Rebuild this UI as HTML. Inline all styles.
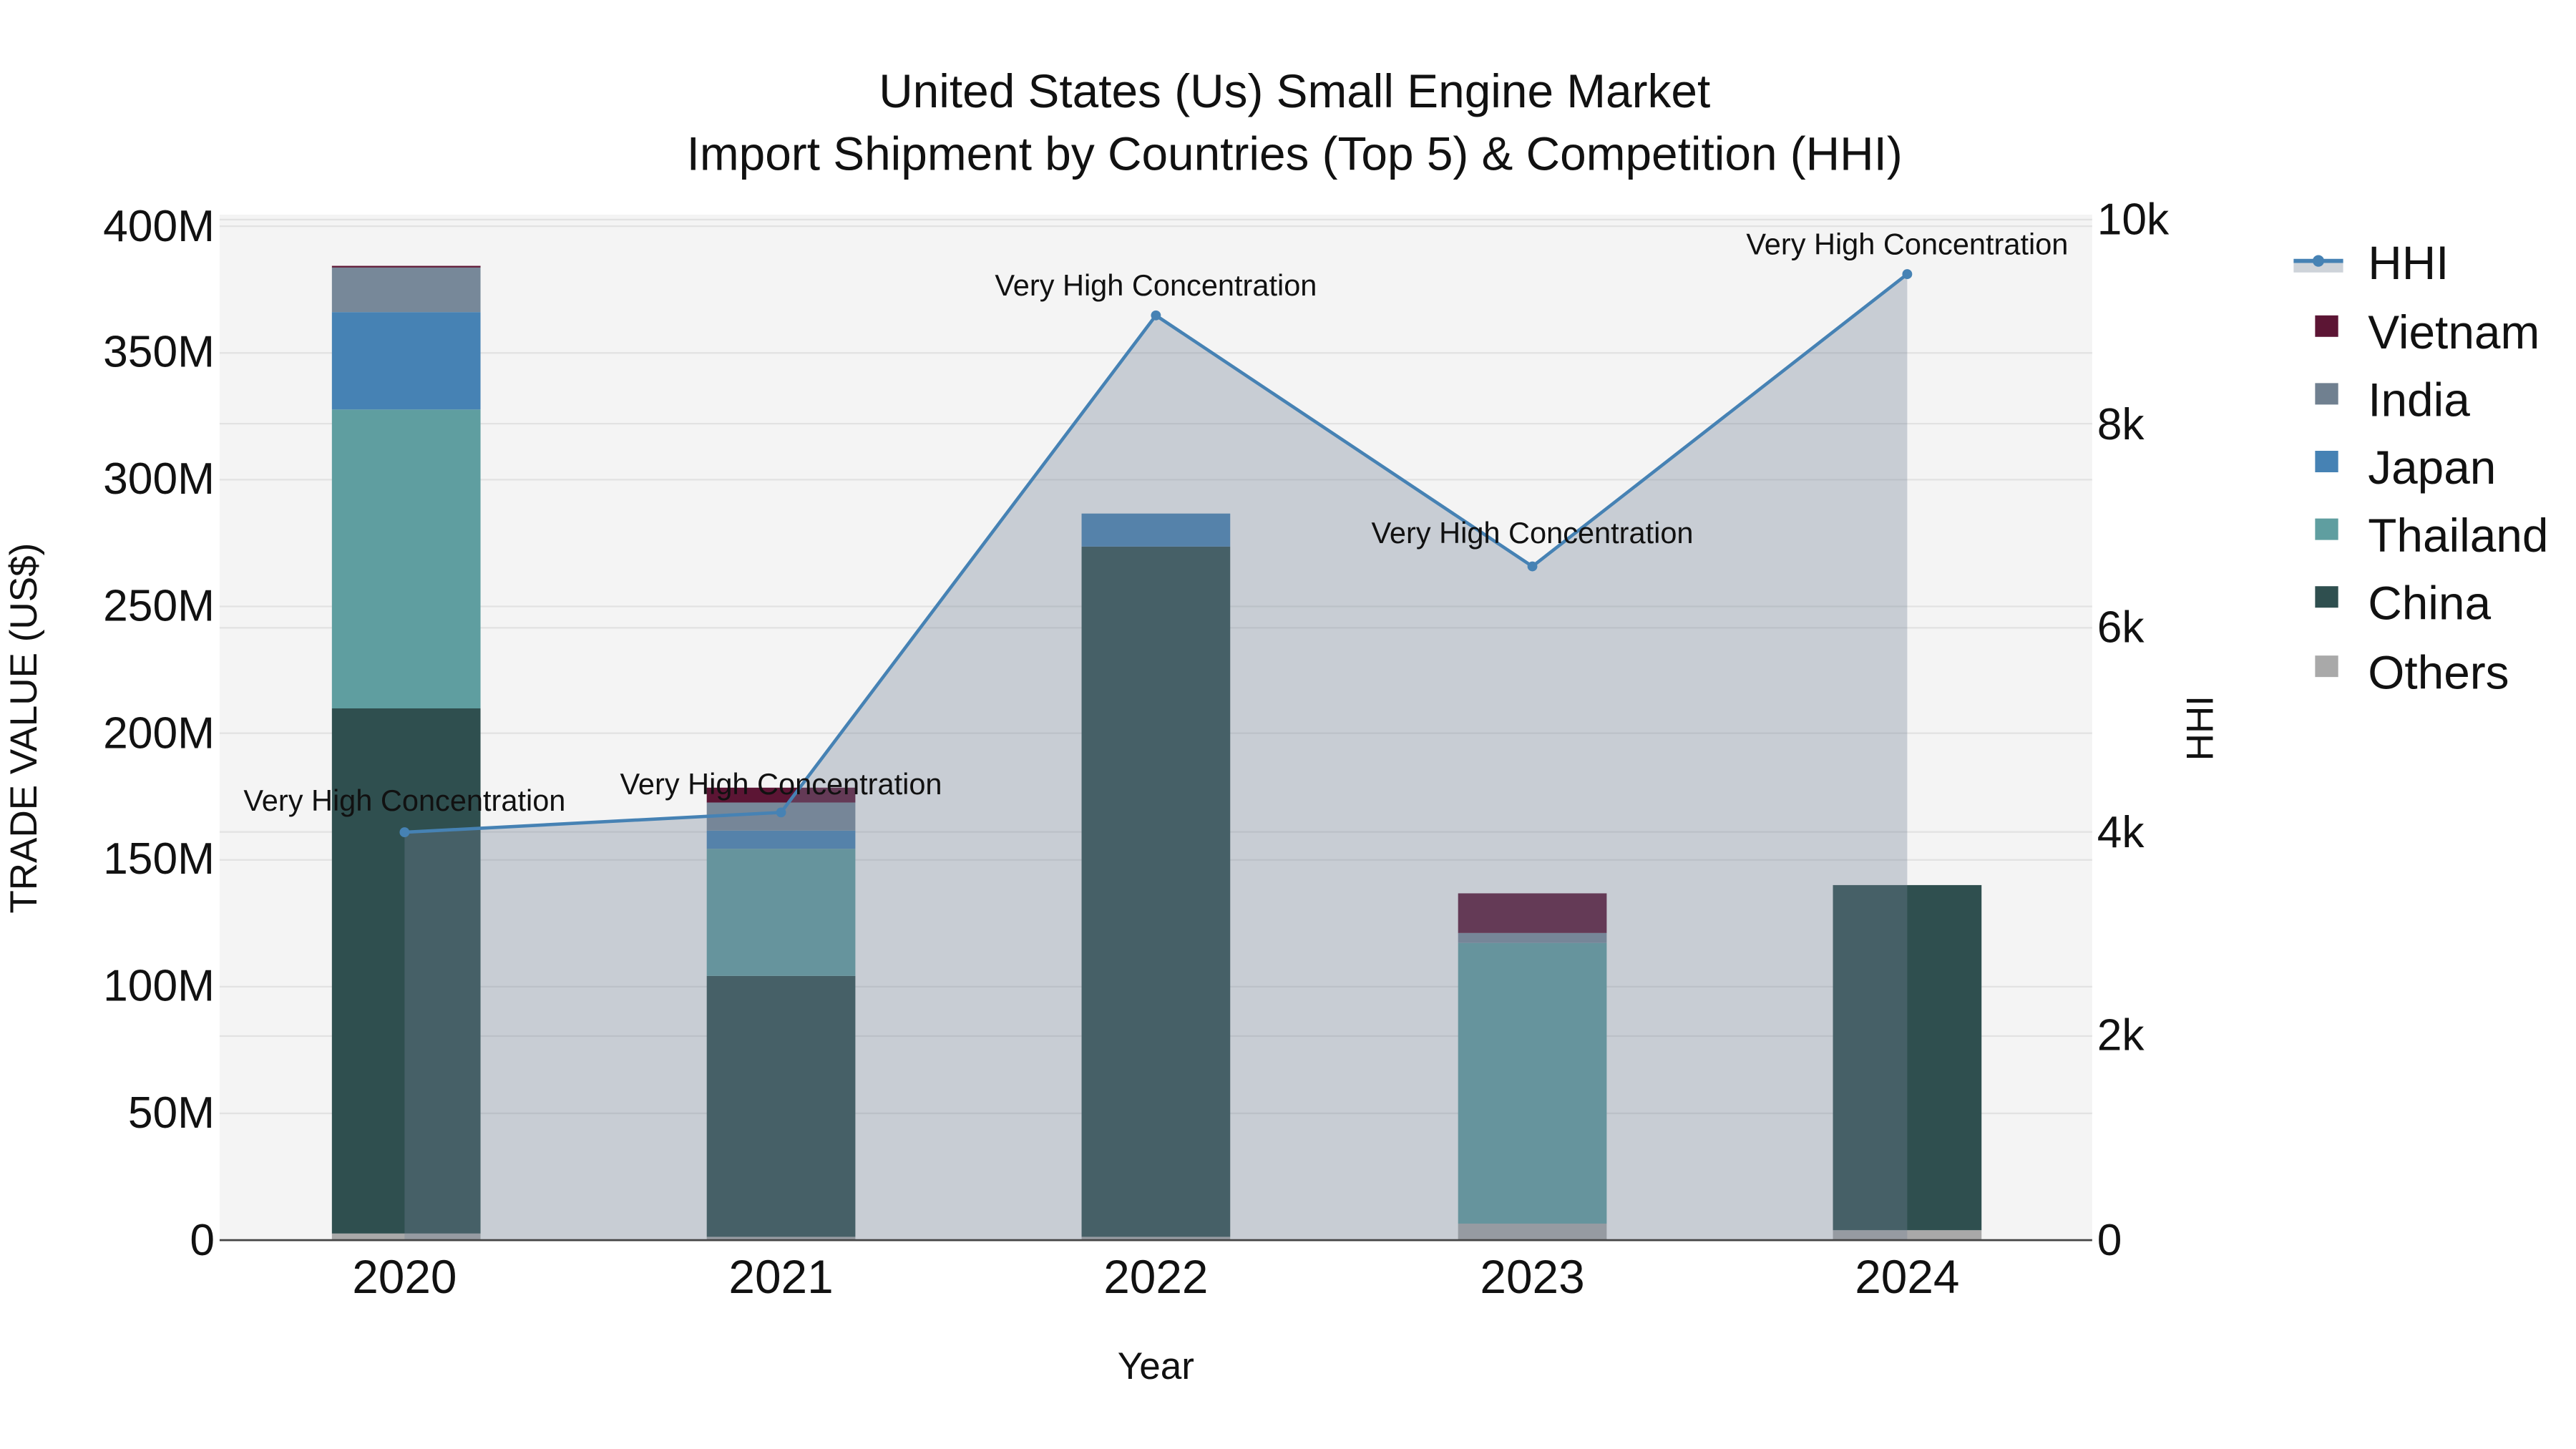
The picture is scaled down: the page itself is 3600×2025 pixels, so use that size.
<!DOCTYPE html>
<html><head><meta charset="utf-8"><style>html,body{margin:0;padding:0;background:#fff}svg{display:block}text{font-family:"Liberation Sans",sans-serif;fill:#111}</style></head><body>
<svg width="3600" height="2025" viewBox="0 0 1560 877.5" xmlns="http://www.w3.org/2000/svg">
<rect x="0" y="0" width="1560" height="877.5" fill="#fff"/>
<rect x="133" y="130" width="1134" height="621" fill="#f4f4f4"/>
<g stroke="#e2e2e2" stroke-width="1">
<line x1="133" x2="1267" y1="137" y2="137"/><line x1="133" x2="1267" y1="213.75" y2="213.75"/><line x1="133" x2="1267" y1="290.5" y2="290.5"/><line x1="133" x2="1267" y1="367.25" y2="367.25"/><line x1="133" x2="1267" y1="444" y2="444"/><line x1="133" x2="1267" y1="520.75" y2="520.75"/><line x1="133" x2="1267" y1="597.5" y2="597.5"/><line x1="133" x2="1267" y1="674.25" y2="674.25"/>
<line x1="133" x2="1267" y1="133" y2="133"/><line x1="133" x2="1267" y1="256.6" y2="256.6"/><line x1="133" x2="1267" y1="380.2" y2="380.2"/><line x1="133" x2="1267" y1="503.8" y2="503.8"/><line x1="133" x2="1267" y1="627.4" y2="627.4"/>
</g>
<g>
<rect x="201" y="747" width="90" height="4" fill="#a9a9a9"/>
<rect x="201" y="429" width="90" height="318" fill="#2f4f4f"/>
<rect x="201" y="248" width="90" height="181" fill="#5f9ea0"/>
<rect x="201" y="189" width="90" height="59" fill="#4682b4"/>
<rect x="201" y="162" width="90" height="27" fill="#778899"/>
<rect x="201" y="161" width="90" height="1" fill="#5c1534"/>

<rect x="428" y="749" width="90" height="2" fill="#a9a9a9"/>
<rect x="428" y="591" width="90" height="158" fill="#2f4f4f"/>
<rect x="428" y="514" width="90" height="77" fill="#5f9ea0"/>
<rect x="428" y="503" width="90" height="11" fill="#4682b4"/>
<rect x="428" y="486" width="90" height="17" fill="#778899"/>
<rect x="428" y="477" width="90" height="9" fill="#5c1534"/>

<rect x="655" y="749" width="90" height="2" fill="#a9a9a9"/>
<rect x="655" y="331" width="90" height="418" fill="#2f4f4f"/>
<rect x="655" y="311" width="90" height="20" fill="#4682b4"/>

<rect x="883" y="741" width="90" height="10" fill="#a9a9a9"/>
<rect x="883" y="571" width="90" height="170" fill="#5f9ea0"/>
<rect x="883" y="565" width="90" height="6" fill="#778899"/>
<rect x="883" y="541" width="90" height="24" fill="#5c1534"/>

<rect x="1110" y="745" width="90" height="6" fill="#a9a9a9"/>
<rect x="1110" y="536" width="90" height="209" fill="#2f4f4f"/>
</g>
<polygon points="245,751 245,504 473,492 700,191 928,343 1155,166 1155,751" fill="rgb(116,131,151)" fill-opacity="0.345"/>
<polyline points="245,504 473,492 700,191 928,343 1155,166" fill="none" stroke="#4682b4" stroke-width="2"/>
<g fill="#4682b4"><circle cx="245" cy="504" r="3"/><circle cx="473" cy="492" r="3"/><circle cx="700" cy="191" r="3"/><circle cx="928" cy="343" r="3"/><circle cx="1155" cy="166" r="3"/></g>
<g font-size="18" text-anchor="middle">
<text x="245" y="491">Very High Concentration</text>
<text x="473" y="481">Very High Concentration</text>
<text x="700" y="179">Very High Concentration</text>
<text x="928" y="329">Very High Concentration</text>
<text x="1155" y="154">Very High Concentration</text>
</g>
<line x1="133" x2="1267" y1="751" y2="751" stroke="#444" stroke-width="1.2"/>
<g font-size="27" text-anchor="end">
<text x="130" y="760">0</text><text x="130" y="683">50M</text><text x="130" y="606">100M</text><text x="130" y="529">150M</text><text x="130" y="453">200M</text><text x="130" y="376">250M</text><text x="130" y="299">300M</text><text x="130" y="222">350M</text><text x="130" y="146">400M</text>
</g>
<g font-size="27">
<text x="1270" y="760">0</text><text x="1270" y="636">2k</text><text x="1270" y="513">4k</text><text x="1270" y="389">6k</text><text x="1270" y="266">8k</text><text x="1270" y="142">10k</text>
</g>
<g font-size="28.5" text-anchor="middle">
<text x="245" y="783">2020</text><text x="473" y="783">2021</text><text x="700" y="783">2022</text><text x="928" y="783">2023</text><text x="1155" y="783">2024</text>
</g>
<text x="700" y="835" font-size="23" text-anchor="middle">Year</text>
<text transform="translate(22,441) rotate(-90)" font-size="23" text-anchor="middle">TRADE VALUE (US$)</text>
<text transform="translate(1340,441) rotate(-90)" font-size="23" text-anchor="middle">HHI</text>
<g font-size="28.5" text-anchor="middle">
<text x="784" y="65">United States (Us) Small Engine Market</text>
<text x="784" y="103">Import Shipment by Countries (Top 5) &amp; Competition (HHI)</text>
</g>
<rect x="1389" y="158" width="30" height="7" fill="#ced3d9"/>
<line x1="1389" x2="1419" y1="158" y2="158" stroke="#4682b4" stroke-width="2.5"/>
<circle cx="1404" cy="158" r="3.5" fill="#4682b4"/>
<g>
<rect x="1402" y="191" width="14" height="13" fill="#5c1534"/>
<rect x="1402" y="232" width="14" height="13" fill="#708090"/>
<rect x="1402" y="273" width="14" height="13" fill="#4682b4"/>
<rect x="1402" y="314" width="14" height="13" fill="#5f9ea0"/>
<rect x="1402" y="355" width="14" height="13" fill="#2f4f4f"/>
<rect x="1402" y="397" width="14" height="13" fill="#a9a9a9"/>
</g>
<g font-size="28.5">
<text x="1434" y="169">HHI</text>
<text x="1434" y="211">Vietnam</text>
<text x="1434" y="252">India</text>
<text x="1434" y="293">Japan</text>
<text x="1434" y="334">Thailand</text>
<text x="1434" y="375">China</text>
<text x="1434" y="417">Others</text>
</g>
</svg>
</body></html>
